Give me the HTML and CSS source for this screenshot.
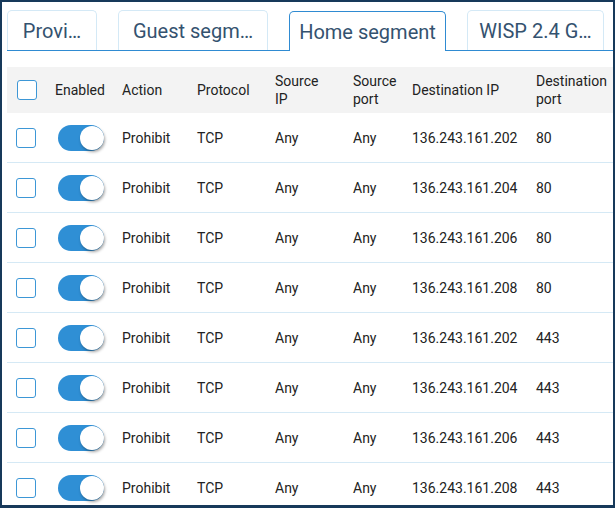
FILE: index.html
```html
<!DOCTYPE html>
<html>
<head>
<meta charset="utf-8">
<link rel="stylesheet" href="styles.css">
</head>
<body>
<div class="frame">
  <div class="tabs">
    <div class="tab t1">Provi…</div>
    <div class="tab t2">Guest segm…</div>
    <div class="tab t3 active">Home segment</div>
    <div class="tab t4">WISP 2.4 G…</div>
  </div>
  <div class="table">
    <div class="row head">
      <div class="c"><span class="cb"></span></div>
      <div>Enabled</div>
      <div>Action</div>
      <div>Protocol</div>
      <div>Source<br>IP</div>
      <div>Source<br>port</div>
      <div>Destination IP</div>
      <div>Destination<br>port</div>
    </div>
    <div class="row"><div class="c"><span class="cb"></span></div><div><span class="tg"></span></div><div>Prohibit</div><div>TCP</div><div>Any</div><div>Any</div><div>136.243.161.202</div><div>80</div></div>
    <div class="row"><div class="c"><span class="cb"></span></div><div><span class="tg"></span></div><div>Prohibit</div><div>TCP</div><div>Any</div><div>Any</div><div>136.243.161.204</div><div>80</div></div>
    <div class="row"><div class="c"><span class="cb"></span></div><div><span class="tg"></span></div><div>Prohibit</div><div>TCP</div><div>Any</div><div>Any</div><div>136.243.161.206</div><div>80</div></div>
    <div class="row"><div class="c"><span class="cb"></span></div><div><span class="tg"></span></div><div>Prohibit</div><div>TCP</div><div>Any</div><div>Any</div><div>136.243.161.208</div><div>80</div></div>
    <div class="row"><div class="c"><span class="cb"></span></div><div><span class="tg"></span></div><div>Prohibit</div><div>TCP</div><div>Any</div><div>Any</div><div>136.243.161.202</div><div>443</div></div>
    <div class="row"><div class="c"><span class="cb"></span></div><div><span class="tg"></span></div><div>Prohibit</div><div>TCP</div><div>Any</div><div>Any</div><div>136.243.161.204</div><div>443</div></div>
    <div class="row"><div class="c"><span class="cb"></span></div><div><span class="tg"></span></div><div>Prohibit</div><div>TCP</div><div>Any</div><div>Any</div><div>136.243.161.206</div><div>443</div></div>
    <div class="row"><div class="c"><span class="cb"></span></div><div><span class="tg"></span></div><div>Prohibit</div><div>TCP</div><div>Any</div><div>Any</div><div>136.243.161.208</div><div>443</div></div>
  </div>
</div>
</body>
</html>
```
FILE: styles.css
```css
html, body {
  margin: 0;
  padding: 0;
  background: #fff;
}
.frame {
  box-sizing: border-box;
  width: 615px;
  height: 508px;
  border: 2px solid #17395a;
  border-bottom-width: 3px;
  padding-left: 5px;
  overflow: hidden;
  font-family: Roboto, "Liberation Sans", sans-serif;
  background: #fff;
}
.tabs {
  display: flex;
  align-items: flex-end;
  gap: 21px;
  margin-top: 8px;
  height: 40px;
  border-bottom: 1px solid #2f8bd2;
}
.tab {
  box-sizing: border-box;
  height: 40px;
  border: 1px solid #d4e9f6;
  border-bottom: none;
  border-radius: 5px 5px 0 0;
  display: flex;
  align-items: center;
  justify-content: center;
  font-size: 20px;
  color: #34526f;
  white-space: nowrap;
  background: #fff;
}
.t1 { width: 90px; }
.t2 { width: 150px; }
.t3 { width: 157px; }
.t4 { width: 137px; }
.tab.active {
  height: 40px;
  border-color: #2f8bd2;
  margin-bottom: -1px;
  padding-bottom: 1px;
  padding-top: 1px;
}
.table {
  margin-top: 16px;
}
.row {
  display: grid;
  grid-template-columns: 48px 67px 75px 78px 78px 59px 124px 1fr;
  align-items: center;
  height: 50px;
  box-sizing: border-box;
  border-bottom: 1px solid #d5e9f5;
  font-size: 14px;
  color: #222;
}
.row.head {
  height: 46px;
  background: #f3f3f3;
  border-bottom: none;
  line-height: 18px;
}
.head .c { padding-left: 10px; }
.c {
  padding-left: 9px;
  display: flex;
  align-items: center;
}
.cb {
  display: block;
  box-sizing: border-box;
  width: 20px;
  height: 20px;
  border: 1px solid #3d97d6;
  border-radius: 3px;
  background: #fff;
}
.tg {
  display: block;
  position: relative;
  width: 46px;
  height: 26px;
  margin-left: 3px;
  border-radius: 13px;
  background: #2f8fd5;
}
.tg::after {
  content: "";
  position: absolute;
  right: 0;
  top: 1px;
  width: 24px;
  height: 24px;
  border-radius: 50%;
  background: #fff;
  box-shadow: 1px 2px 3px rgba(0, 0, 0, 0.35);
}
```
